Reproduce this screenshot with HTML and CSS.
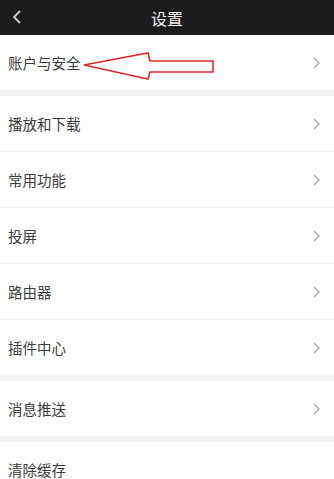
FILE: index.html
```html
<!DOCTYPE html>
<html lang="zh">
  <head>
    <meta charset="UTF-8" />
    <meta name="viewport" content="width=device-width, initial-scale=1.0" />
    <title>设置</title>
    <link rel="stylesheet" href="styles.css">
  </head>
  <body>
    <header class="topbar">
      <svg class="back" width="12" height="16" viewBox="0 0 12 16">
        <path d="M9 2 L3 8 L9 14" fill="none" stroke="#d0d0d0" stroke-width="1.8" />
      </svg>
      <h1>设置</h1>
    </header>
    <main>
      <section class="group">
        <div class="row">
          <span>账户与安全</span>
          <svg class="chev" width="8" height="12" viewBox="0 0 8 12"><path d="M2 1 L7 6 L2 11" fill="none" stroke="#a0a0a0" stroke-width="1.2" /></svg>
          <svg class="arrow" width="140" height="34" viewBox="80 48 140 34">
            <polygon points="84,65 148,53 150,61 213,61 213,72 150,72 148,79" fill="#fff" stroke="#dc2a30" stroke-width="1.6" stroke-linejoin="miter" />
          </svg>
        </div>
      </section>
      <section class="group">
        <div class="row">
          <span>播放和下载</span>
          <svg class="chev" width="8" height="12" viewBox="0 0 8 12"><path d="M2 1 L7 6 L2 11" fill="none" stroke="#a0a0a0" stroke-width="1.2" /></svg>
        </div>
        <div class="row">
          <span>常用功能</span>
          <svg class="chev" width="8" height="12" viewBox="0 0 8 12"><path d="M2 1 L7 6 L2 11" fill="none" stroke="#a0a0a0" stroke-width="1.2" /></svg>
        </div>
        <div class="row">
          <span>投屏</span>
          <svg class="chev" width="8" height="12" viewBox="0 0 8 12"><path d="M2 1 L7 6 L2 11" fill="none" stroke="#a0a0a0" stroke-width="1.2" /></svg>
        </div>
        <div class="row">
          <span>路由器</span>
          <svg class="chev" width="8" height="12" viewBox="0 0 8 12"><path d="M2 1 L7 6 L2 11" fill="none" stroke="#a0a0a0" stroke-width="1.2" /></svg>
        </div>
        <div class="row">
          <span>插件中心</span>
          <svg class="chev" width="8" height="12" viewBox="0 0 8 12"><path d="M2 1 L7 6 L2 11" fill="none" stroke="#a0a0a0" stroke-width="1.2" /></svg>
        </div>
      </section>
      <section class="group">
        <div class="row">
          <span>消息推送</span>
          <svg class="chev" width="8" height="12" viewBox="0 0 8 12"><path d="M2 1 L7 6 L2 11" fill="none" stroke="#a0a0a0" stroke-width="1.2" /></svg>
        </div>
      </section>
      <section class="group">
        <div class="row">
          <span>清除缓存</span>
        </div>
      </section>
    </main>
  </body>
</html>
```
FILE: styles.css
```css
body {
    margin: 0;
    background: #f2f2f2;
    font-family: "Noto Sans CJK SC", "Noto Sans", sans-serif;
    color: #3c3c3c;
}

.topbar {
    height: 35px;
    background: #1c1c1c;
    display: flex;
    align-items: center;
    justify-content: center;
    position: relative;
}

.topbar h1 {
    margin: 0;
    font-size: 16px;
    font-weight: normal;
    color: #f4f4f4;
}

.back {
    position: absolute;
    left: 11px;
    top: 9px;
}

.group {
    background: #fff;
    margin-bottom: 6px;
}

.row {
    height: 55px;
    display: flex;
    align-items: center;
    justify-content: space-between;
    padding: 0 14px 0 8px;
    border-bottom: 1px solid #efefef;
    font-size: 14.5px;
    position: relative;
}

.row:last-child {
    border-bottom: none;
}

.arrow {
    position: absolute;
    left: 80px;
    top: 13px;
}
```
